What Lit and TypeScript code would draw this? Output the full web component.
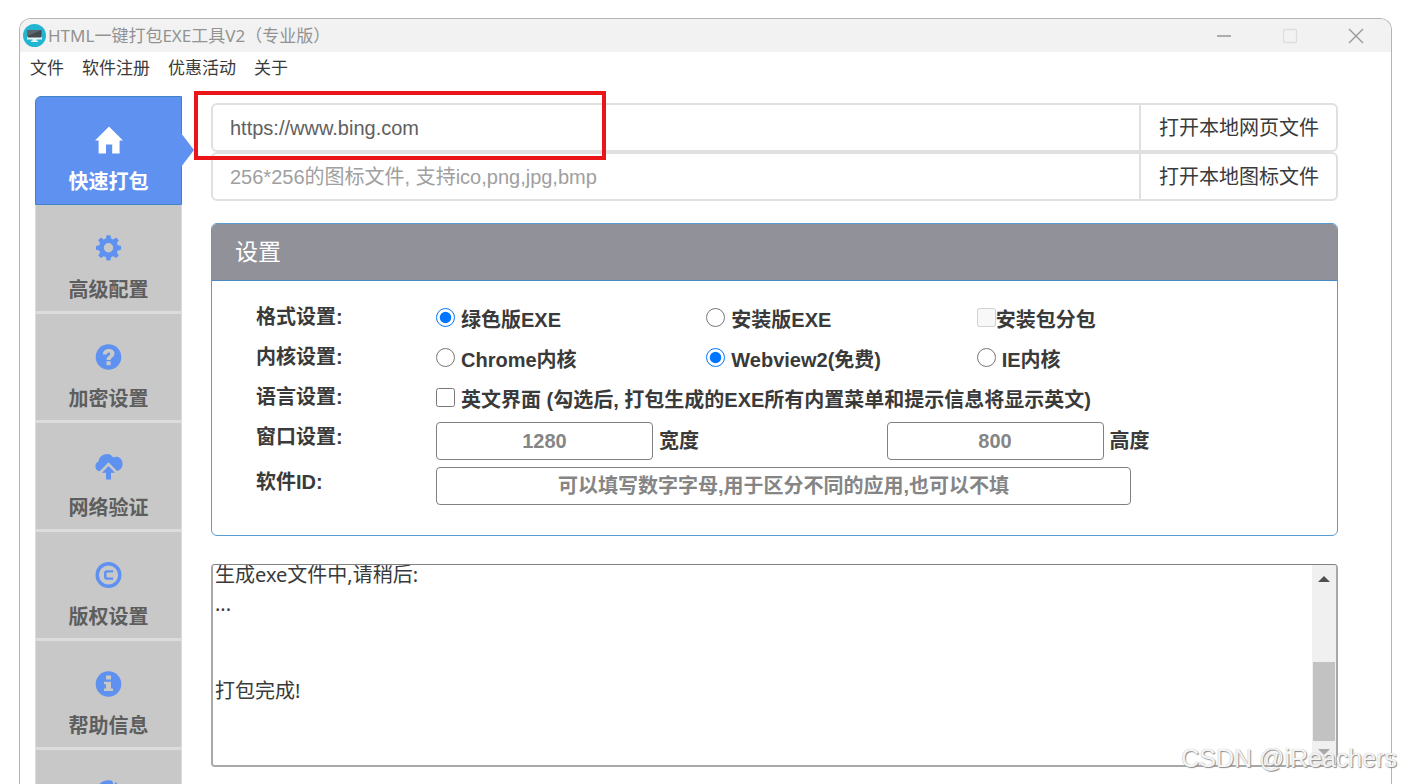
import { LitElement, html, css, svg } from "lit";
import { customElement, query } from "lit/decorators.js";
import { classMap } from "lit/directives/class-map.js";

const icons = {
  home: svg`<path d="M14 0.5 28 14.6H24.6V27.5H17.2V18.6H11V27.5H3.6V14.6H0Z"/>`,
  cog: svg`<path fill-rule="evenodd" d="M11.6 1.2h3.8l.7 3.3 2.2.9 2.8-1.9 2.7 2.7-1.9 2.8.9 2.2 3.3.7v3.8l-3.3.7-.9 2.2 1.9 2.8-2.7 2.7-2.8-1.9-2.2.9-.7 3.3h-3.8l-.7-3.3-2.2-.9-2.8 1.9-2.7-2.7 1.9-2.8-.9-2.2-3.3-.7v-3.8l3.3-.7.9-2.2-1.9-2.8 2.7-2.7 2.8 1.9 2.2-.9zM13.5 9.1a4.7 4.7 0 1 0 0 9.4 4.7 4.7 0 0 0 0-9.4z"/>`,
  question: svg`<circle cx="13.5" cy="14" r="12.8"/><path class="hole" d="M7.9 11.6C8 7.8 10.4 6 13.9 6c3.4 0 5.6 1.7 5.6 4.6 0 2.4-1.4 3.4-2.7 4.3-.9.6-1.2 1-1.200 2.1h-4c0-2.2.8-3.2 2.2-4.2.9-.7 1.4-1.1 1.4-1.9 0-.8-.5-1.3-1.5-1.3-1.2 0-1.8.7-1.9 2zM11.5 18.3h4.2v4h-4.2z"/>`,
  cloud: svg`<path d="M3.8 19.2A5.2 5.2 0 0 1 3.5 9.6 8.2 8.2 0 0 1 18.3 5.5 6.4 6.4 0 0 1 27.5 11.3C28 15 25.5 18.4 22 19L13.5 10.2 5.5 18.6A3 3 0 0 1 3.8 19.2Z"/><path d="M13.5 14 20 20.8H16V27.5H11V20.8H7Z"/>`,
  copyright: svg`<path fill-rule="evenodd" d="M13.5 1a13 13 0 1 0 0 26 13 13 0 0 0 0-26zm0 3.4a9.6 9.6 0 1 1 0 19.2 9.6 9.6 0 0 1 0-19.2z"/><path d="M18.2 9.2H12a3 3 0 0 0-3 3v3.6a3 3 0 0 0 3 3h6.2v-2.3h-5.5a1.3 1.3 0 0 1-1.3-1.3v-2.4a1.3 1.3 0 0 1 1.3-1.3h5.5z"/>`,
  info: svg`<circle cx="13.5" cy="14" r="12.8"/><path class="hole" d="M11 5.5h5v4h-5zM9 11.8h7v6.6h2v2.5H9v-2.5h2v-4.1H9z"/>`,
  globe: svg`<circle cx="13.5" cy="14" r="12.8"/><path class="hole" d="M16.500 0.500l2 4.500 1.500 1V1z"/>`,
};

const tabs = [
  { text: "快速打包", icon: icons.home, active: true },
  { text: "高级配置", icon: icons.cog },
  { text: "加密设置", icon: icons.question },
  { text: "网络验证", icon: icons.cloud },
  { text: "版权设置", icon: icons.copyright },
  { text: "帮助信息", icon: icons.info },
  { text: "", icon: icons.globe },
];

const log = "\n".repeat(8) + "生成exe文件中,请稍后:\n...\n\n\n打包完成!" + "\n".repeat(4);

@customElement("app-root")
export class AppRoot extends LitElement {
  @query(".log-text") private logText!: HTMLTextAreaElement;

  static styles = css`
    :host {
      display: block;
      position: relative;
      box-sizing: border-box;
      height: 100vh;
      overflow: hidden;
      padding: 18px 10px 0 19px;
      background: #fff;
      color: #3a3a3a;
      font: 20px/30px "Liberation Sans", "Noto Sans CJK SC", sans-serif;
    }
    * { box-sizing: border-box; }
    button, input, textarea { font: inherit; color: inherit; margin: 0; }
    button { cursor: pointer; }
    .window {
      min-height: 100%;
      border: 1px solid #b4b4b4;
      border-bottom: 0;
      border-radius: 12px 12px 0 0;
      overflow: hidden;
    }
    .titlebar {
      display: flex;
      align-items: center;
      height: 33px;
      padding: 0 2px 0 3px;
      background: #f2f2f2;
      color: #929292;
      font: 17px/24px "Noto Sans", "Noto Sans CJK SC", sans-serif;
    }
    .logo { width: 23px; height: 23px; margin-right: 2px; }
    .title { flex: 1; font: inherit; margin: 0; }
    .control { display: flex; align-items: center; justify-content: center; width: 66px; height: 33px; padding: 0; border: 0; background: none; }
    .control svg { width: 16px; height: 16px; fill: none; stroke: #969696; stroke-width: 1.3; }
    .control:disabled svg { stroke: #dedede; }
    .menu { display: flex; gap: 18px; padding: 1px 10px; height: 29px; }
    .menu button { padding: 0; border: 0; background: none; font: 17px/26px "Noto Sans CJK SC", sans-serif; }
    .body { display: flex; align-items: flex-start; gap: 29px; padding: 15px 53px 0 15px; }
    .tabs { flex: none; width: 147px; display: flex; flex-direction: column; }
    .tab {
      position: relative;
      display: flex;
      flex-direction: column;
      align-items: center;
      gap: 13px;
      height: 109px;
      padding: 29px 0 0;
      border: 1px solid #dcdcdc;
      border-top-width: 0;
      border-bottom-width: 3px;
      background: #c8c8c8;
      color: #5e5e5e;
      font-weight: 700;
    }
    .tab svg { flex: none; width: 28px; height: 28px; fill: #5e91f0; }
    .tab .hole { fill: #c8c8c8; }
    .tab.active { border: 1px solid #3f84c8; border-radius: 6px 0 0 0; background: #5e91f0; color: #fff; }
    .tab.active svg { fill: #fff; }
    .tab.active::after {
      content: "";
      position: absolute;
      left: 100%;
      top: 36px;
      border: solid transparent;
      border-width: 17px 0 17px 13px;
      border-left-color: #5e91f0;
    }
    .main { flex: 1; min-width: 0; padding-top: 7px; }
    .source { position: relative; display: flex; height: 49px; }
    .source input {
      flex: 1;
      min-width: 0;
      padding: 0 17px;
      border: 2px solid #e0e0e0;
      border-right-width: 1px;
      border-radius: 6px 0 0 6px;
      color: #606060;
      background: #fff;
      outline: 0;
    }
    .source input::placeholder { color: #a0a0a0; }
    .source button { padding: 0 17px 0 18px; border: 2px solid #e0e0e0; border-left-width: 1px; border-radius: 0 6px 6px 0; background: #fff; }
    .highlight { position: absolute; left: -17px; top: -12px; width: 412px; height: 69px; border: 4px solid #ea1519; z-index: 1; pointer-events: none; }
    .panel { margin-top: 22px; border: 1px solid #5b9bd0; border-radius: 6px; overflow: hidden; }
    .panel-title { margin: 0; padding: 0 23px; border-bottom: 1px solid #4a8ac4; background: #919199; color: #fff; font-size: 23px; font-weight: 400; line-height: 56px; }
    .settings { padding: 16px 90px 28px 44px; font-weight: 700; }
    .row { display: grid; grid-template-columns: 180px 1fr; line-height: 40px; }
    .row.boxed { height: 45px; }
    .choices { display: grid; grid-template-columns: repeat(3, 1fr); }
    .size { display: grid; grid-template-columns: 5fr 4fr; }
    .choice { display: flex; align-items: center; gap: 6px; height: 40px; white-space: nowrap; }
    .choice.tight { gap: 0; }
    .choice input { flex: none; width: 19px; height: 19px; }
    .choice span { padding-top: 5px; }
    .field { display: flex; align-items: center; gap: 6px; height: 38px; margin-top: 5px; }
    .field input { width: 217px; height: 38px; padding: 0 8px; border: 1px solid #808080; border-radius: 4px; text-align: center; font-weight: 700; background: #fff; }
    .field .long { width: 695px; }
    .field input::placeholder { color: #858585; }
    .log { display: flex; height: 203px; margin-top: 28px; border: 2px solid #a8a8a8; border-top: 1px solid #808080; border-radius: 4px; overflow: hidden; }
    .log-text { flex: 1; padding: 0 2px; border: 0; outline: 0; resize: none; overflow: hidden; background: #fff; line-height: 29px; font-family: "Noto Sans", "Noto Sans CJK SC", sans-serif; }
    .scroll { display: flex; flex-direction: column; align-items: center; width: 24px; padding: 11px 1px 10px; background: #f0f0f0; }
    .scroll svg { width: 12px; height: 6px; fill: #505050; }
    .thumb { width: 100%; height: 79px; margin: auto 0 8px; background: #c2c2c2; }
    .scroll .down { fill: #a8a8a8; }
    .watermark { position: absolute; right: 5px; bottom: 11px; color: #f4f4f4; font-size: 25px; text-shadow: 1px 1px 1px #8c8c8c, 0 0 1px #b4b4b4; z-index: 2; }
  `;

  firstUpdated() {
    this.logText.scrollTop = 237;
  }

  private choice(type: string, name: string, text: string, checked = false) {
    return html`<label class="choice"><input type=${type} name=${name} ?checked=${checked}><span>${text}</span></label>`;
  }

  render() {
    return html`
      <div class="window">
        <header class="titlebar">
          <svg class="logo" viewBox="0 0 23 23"><circle cx="11.5" cy="11.5" r="11.5" fill="#22b5d2"/><path fill="#e9f5f7" d="M4 12h15v3.600H13.500v1.200H15v1.200H8v-1.200h1.500v-1.200H4z"/><path fill="#444a52" d="M4.500 6h14v7.500h-14z"/><path fill="#5f656c" d="M4.500 6h14l-14 6z"/></svg>
          <h1 class="title">HTML一键打包EXE工具V2（专业版）</h1>
          <button class="control" aria-label="最小化"><svg viewBox="0 0 16 16"><path d="M1 8h14"/></svg></button>
          <button class="control" aria-label="最大化" disabled><svg viewBox="0 0 16 16"><rect x="1.5" y="1.5" width="13" height="13" rx="1"/></svg></button>
          <button class="control" aria-label="关闭"><svg viewBox="0 0 16 16"><path d="M1 1l14 14M15 1L1 15"/></svg></button>
        </header>
        <nav class="menu">
          ${["文件", "软件注册", "优惠活动", "关于"].map((m) => html`<button>${m}</button>`)}
        </nav>
        <div class="body">
          <nav class="tabs">
            ${tabs.map((t) => html`
              <button class=${classMap({ tab: true, active: !!t.active })} aria-label=${t.text || "网站"}>
                <svg viewBox="0 0 28 28" aria-hidden="true">${t.icon}</svg>${t.text}
              </button>`)}
          </nav>
          <main class="main">
            <div class="source">
              <input type="text" aria-label="网址" .value=${"https://www.bing.com"}>
              <button>打开本地网页文件</button>
              <div class="highlight"></div>
            </div>
            <div class="source">
              <input type="text" aria-label="图标文件" placeholder="256*256的图标文件, 支持ico,png,jpg,bmp">
              <button>打开本地图标文件</button>
            </div>
            <section class="panel">
              <h2 class="panel-title">设置</h2>
              <div class="settings">
                <div class="row"><span>格式设置:</span>
                  <div class="choices">
                    ${this.choice("radio", "format", "绿色版EXE", true)}
                    ${this.choice("radio", "format", "安装版EXE")}
                    <label class="choice tight"><input type="checkbox" disabled><span>安装包分包</span></label>
                  </div>
                </div>
                <div class="row"><span>内核设置:</span>
                  <div class="choices">
                    ${this.choice("radio", "core", "Chrome内核")}
                    ${this.choice("radio", "core", "Webview2(免费)", true)}
                    ${this.choice("radio", "core", "IE内核")}
                  </div>
                </div>
                <div class="row"><span>语言设置:</span>
                  ${this.choice("checkbox", "english", "英文界面 (勾选后, 打包生成的EXE所有内置菜单和提示信息将显示英文)")}
                </div>
                <div class="row boxed"><span>窗口设置:</span>
                  <div class="size">
                    <div class="field"><input id="width" placeholder="1280"><label for="width">宽度</label></div>
                    <div class="field"><input id="height" placeholder="800"><label for="height">高度</label></div>
                  </div>
                </div>
                <div class="row boxed"><label for="appid">软件ID:</label>
                  <div class="field"><input id="appid" class="long" placeholder="可以填写数字字母,用于区分不同的应用,也可以不填"></div>
                </div>
              </div>
            </section>
            <div class="log">
              <textarea class="log-text" aria-label="输出" readonly .value=${log}></textarea>
              <div class="scroll" aria-hidden="true">
                <svg viewBox="0 0 12 6"><path d="M0 6 6 0l6 6z"/></svg>
                <div class="thumb"></div>
                <svg class="down" viewBox="0 0 12 6"><path d="M0 0h12L6 6z"/></svg>
              </div>
            </div>
          </main>
        </div>
      </div>
      <div class="watermark">CSDN @iReachers</div>
    `;
  }
}
